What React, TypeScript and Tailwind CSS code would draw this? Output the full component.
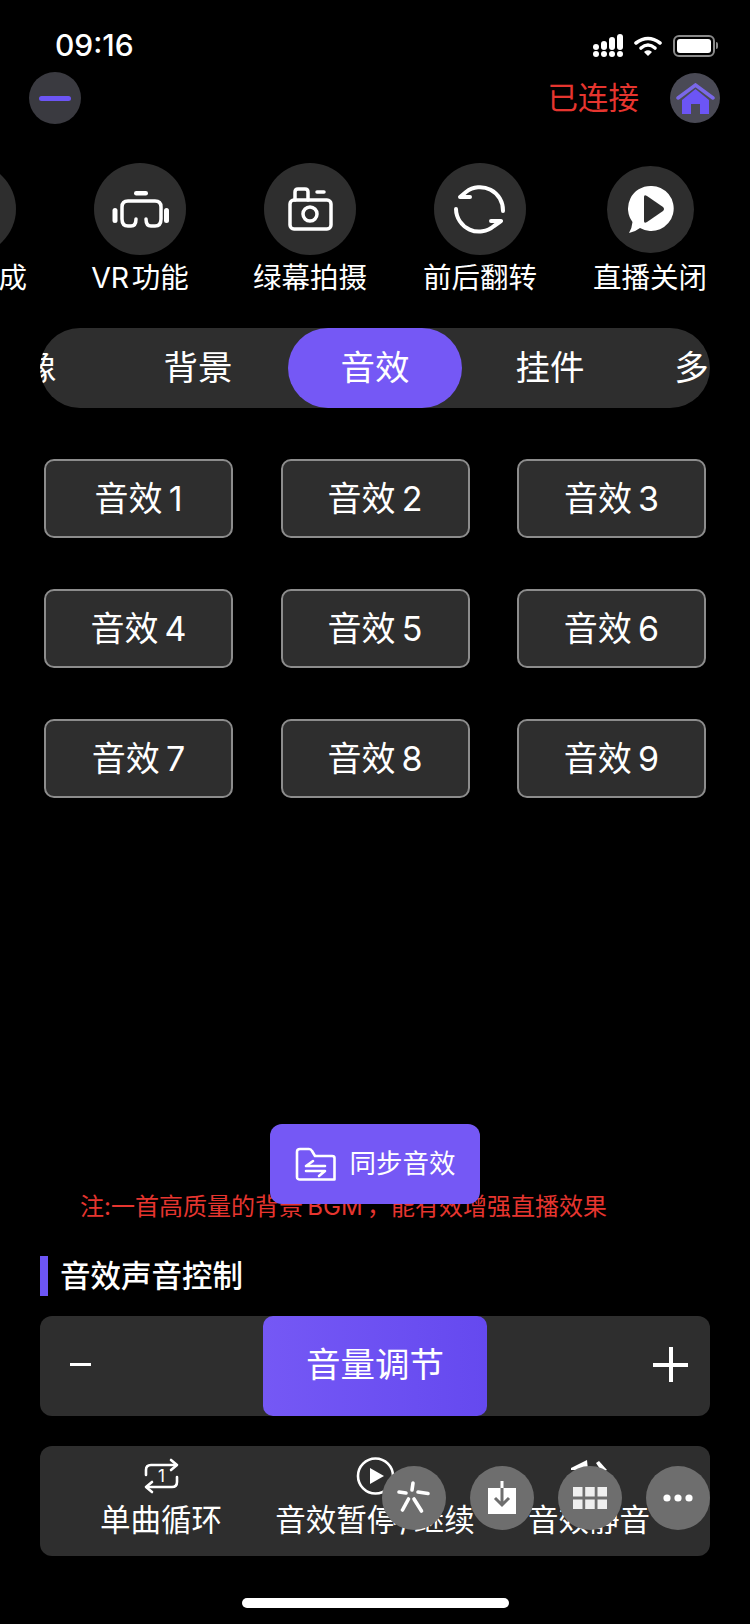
const VrIcon = () => (
  <svg width="57" height="37" viewBox="0 0 57 37" fill="none" stroke="white" strokeWidth="3.500" strokeLinecap="round" strokeLinejoin="round">
    <rect x="22" y="0" width="14" height="4.500" rx="2.200" fill="white" stroke="none" />
    <rect x="0.500" y="17" width="5" height="15" rx="2.500" fill="white" stroke="none" />
    <rect x="52" y="17" width="5" height="15" rx="2.500" fill="white" stroke="none" />
    <path d="M24 28 Q24 35 19 35 H16 Q10 35 10 28 V16 Q10 10 16 10 H43 Q49 10 49 16 V28 Q49 35 43 35 H39 Q34 35 34 28" />
  </svg>
);

const CameraIcon = () => (
  <svg width="45" height="44" viewBox="0 0 45 44" fill="none" stroke="white" strokeWidth="3.500" strokeLinecap="round" strokeLinejoin="round">
    <rect x="2" y="13" width="41" height="29" rx="4" />
    <path d="M7 13 V5 Q7 2 10 2 H17 Q20 2 20 5 V13" />
    <path d="M29 5 H36" />
    <circle cx="22" cy="27" r="7" />
  </svg>
);

const FlipIcon = () => (
  <svg width="52" height="51" viewBox="0 0 52 51" fill="none" stroke="white" strokeWidth="4" strokeLinecap="round" strokeLinejoin="round">
    <path d="M16 13 H6 L12 8 A23 23 0 0 1 49 27" />
    <path d="M2 25 A23 23 0 0 0 40 42 L47 37 H37" />
  </svg>
);

const LiveIcon = () => (
  <svg width="47" height="47" viewBox="0 0 47 47">
    <path d="M23.500 0 A22.500 22.500 0 1 1 13 42 Q8 46 2 47 Q5 42 5.500 36 A22.500 22.500 0 0 1 23.500 0 Z" fill="white" />
    <path d="M17 11 Q17 8 20 10 L36 21 Q38 23 36 25 L20 36 Q17 38 17 35 Z" fill="#2e2e2e" />
  </svg>
);

const HomeIcon = () => (
  <svg width="39" height="31" viewBox="0 0 39 31">
    <path d="M19.500 6 L33 17 V31 H24 V21 H15 V31 H6 V17 Z" fill="#6c55f5" />
    <path d="M2 15 L19.500 2 L37 15" fill="none" stroke="#7a68e8" strokeWidth="3.500" strokeLinecap="round" />
  </svg>
);

const SignalIcon = () => (
  <svg width="30" height="23" viewBox="0 0 30 23" fill="white">
    <circle cx="3" cy="20" r="3" />
    <circle cx="11" cy="20" r="3" />
    <circle cx="19" cy="20" r="3" />
    <circle cx="27" cy="20" r="3" />
    <rect x="0" y="10" width="6" height="6" rx="3" />
    <rect x="8" y="7" width="6" height="9" rx="3" />
    <rect x="16" y="3" width="6" height="13" rx="3" />
    <rect x="24" y="0" width="6" height="16" rx="3" />
  </svg>
);

const WifiIcon = () => (
  <svg width="28" height="20" viewBox="0 0 28 20" fill="none" stroke="white" strokeWidth="3.600" strokeLinecap="round">
    <path d="M2 7 Q14 -2 26 7" />
    <path d="M7 12 Q14 6 21 12" />
    <path d="M14 19 L11 16 Q14 14 17 16 Z" fill="white" strokeWidth="1.500" strokeLinejoin="round" />
  </svg>
);

const BatteryIcon = () => (
  <div className="flex items-center">
    <div className="w-[42px] h-[22px] rounded-[6px] border-2 border-[#8a8a8a] p-[2px]">
      <div className="w-full h-full rounded-[3px] bg-white" />
    </div>
    <div className="w-[2px] h-[7px] rounded-r bg-[#8a8a8a] ml-[1px]" />
  </div>
);

const FolderSyncIcon = () => (
  <svg width="41" height="34" viewBox="0 0 41 34" fill="none" stroke="white" strokeWidth="2.600" strokeLinecap="round" strokeLinejoin="round">
    <path d="M5 2 H14 Q16 2 17 4 L20 9 H37 Q39.500 9 39.500 11 V32.500 H5 Q2 32.500 2 30 V5 Q2 2 5 2 Z" />
    <path d="M18 14 L11 19 H30" />
    <path d="M11 24 H30 L24 29" />
  </svg>
);

const RepeatOneIcon = () => (
  <svg width="35" height="36" viewBox="0 0 35 36" fill="none" stroke="white" strokeWidth="2.600" strokeLinecap="round" strokeLinejoin="round">
    <path d="M2 17 V12 Q2 7 7 7 H32" />
    <path d="M27 2 L33 7 L27 12" />
    <path d="M33 19 V24 Q33 29 28 29 H3" />
    <path d="M8 24 L2 29 L8 34" />
    <text x="17.500" y="24" textAnchor="middle" fontSize="17" fill="white" stroke="none" fontFamily="Inter, sans-serif">1</text>
  </svg>
);

const PlayCircleIcon = () => (
  <svg width="39" height="38" viewBox="0 0 39 38" fill="none">
    <circle cx="19.500" cy="19" r="17.500" stroke="white" strokeWidth="2.600" />
    <path d="M14 11 L28 19 L14 27 Z" fill="white" />
  </svg>
);

const SpeakerIcon = () => (
  <svg width="38" height="12" viewBox="0 0 38 12" fill="white">
    <path d="M1 8 L17 0 L18 10 L1 10 Z" />
    <path d="M26 3 L29 1 L37 10 L32 12 Z" />
  </svg>
);

const StarIcon = () => (
  <svg width="64" height="64" viewBox="0 0 64 64" stroke="white" strokeWidth="3.600" strokeLinecap="round">
    <path d="M30 24 L31 17" />
    <path d="M17 26 L24 27" />
    <path d="M36 26 L46 27.500" />
    <path d="M20.500 44 L26.500 33" />
    <path d="M32 33 L39.500 45" />
  </svg>
);

const DownloadIcon = () => (
  <svg width="64" height="64" viewBox="0 0 64 64">
    <rect x="18" y="22" width="28" height="26" fill="white" />
    <rect x="30.500" y="15" width="3" height="8" fill="white" />
    <path d="M32 22 V38 M25 32 L32 39 L39 32" fill="none" stroke="#6e6e6e" strokeWidth="3" />
  </svg>
);

const GridIcon = () => (
  <svg width="64" height="64" viewBox="0 0 64 64" fill="#efefef">
    <rect x="15" y="21" width="9.500" height="9.500" />
    <rect x="27.200" y="21" width="9.500" height="9.500" />
    <rect x="39.500" y="21" width="9.500" height="9.500" />
    <rect x="15" y="33.500" width="9.500" height="9.500" />
    <rect x="27.200" y="33.500" width="9.500" height="9.500" />
    <rect x="39.500" y="33.500" width="9.500" height="9.500" />
  </svg>
);

const DotsIcon = () => (
  <svg width="64" height="64" viewBox="0 0 64 64" fill="white">
    <circle cx="21" cy="32" r="3.600" />
    <circle cx="32" cy="32" r="3.600" />
    <circle cx="43" cy="32" r="3.600" />
  </svg>
);

const quickActions = [
  { label: "画面合成", icon: null, size: "w-[92px] h-[92px]" },
  { label: "VR\u200a功能", icon: <VrIcon />, size: "w-[92px] h-[92px]" },
  { label: "绿幕拍摄", icon: <CameraIcon />, size: "w-[92px] h-[92px]" },
  { label: "前后翻转", icon: <FlipIcon />, size: "w-[92px] h-[92px]" },
  { label: "直播关闭", icon: <LiveIcon />, size: "w-[87px] h-[87px]" },
];

const tabs = ["录像", "背景", "音效", "挂件", "多媒体"];
const effects = ["音效\u20091", "音效\u20092", "音效\u20093", "音效\u20094", "音效\u20095", "音效\u20096", "音效\u20097", "音效\u20098", "音效\u20099"];

export default function App() {
  return (
    <div className="relative w-[750px] h-[1624px] overflow-hidden bg-black text-white flex flex-col font-['Inter','Noto_Sans_CJK_SC',sans-serif]">
      {/* status bar */}
      <div className="h-[72px] flex items-start justify-between pl-[55px] pr-[32px] pt-[26px]">
        <span className="text-[30px] leading-[38px] font-medium">09:16</span>
        <div className="flex items-center gap-[11px] pt-[8px]">
          <SignalIcon />
          <WifiIcon />
          <BatteryIcon />
        </div>
      </div>

      {/* header */}
      <div className="h-[52px] flex items-center justify-between px-[30px]">
        <div className="w-[52px] h-[52px] -ml-[1px] rounded-full bg-[#3a3a40] flex items-center justify-center">
          <div className="w-[32px] h-[5px] rounded-full bg-[#6c55f5]" />
        </div>
        <div className="flex items-center gap-[31px]">
          <span className="text-[30.5px] leading-[40px] text-[#e6352f]">已连接</span>
          <div className="w-[50px] h-[50px] rounded-full bg-[#4a4a55] flex items-center justify-center">
            <HomeIcon />
          </div>
        </div>
      </div>

      {/* quick actions */}
      <div className="mt-[39px] flex ml-[-115px]">
        {quickActions.map((item) => (
          <div key={item.label} className="w-[170px] shrink-0 flex flex-col items-center">
            <div className="h-[92px] flex items-center justify-center">
              <div className={`${item.size} rounded-full bg-[#2e2e2e] flex items-center justify-center`}>
                {item.icon}
              </div>
            </div>
            <span className="mt-[9px] text-[28.5px] leading-[28px] whitespace-nowrap">{item.label}</span>
          </div>
        ))}
      </div>

      {/* tabs */}
      <div className="mt-[36px] mx-[40px] h-[80px] rounded-full bg-[#2e2e2e] overflow-hidden flex shrink-0">
        <div className="flex ml-[-106px]">
          {tabs.map((tab) => (
            <div
              key={tab}
              className={
                tab === "音效"
                  ? "w-[174px] ml-[2px] shrink-0 h-[80px] rounded-[40px] bg-[#7558f5] flex items-center justify-center text-[34.5px]"
                  : "w-[176px] shrink-0 h-[80px] flex items-center justify-center text-[34.5px]"
              }
            >
              {tab}
            </div>
          ))}
        </div>
      </div>

      {/* effect buttons */}
      <div className="mt-[51px] ml-[44px] grid grid-cols-[189px_189px_189px] gap-x-[47.5px] gap-y-[51px]">
        {effects.map((name) => (
          <div
            key={name}
            className="h-[79px] rounded-[10px] border-2 border-[#8c8c8c] bg-[#2e2e2e] flex items-center justify-center text-[34px]"
          >
            {name}
          </div>
        ))}
      </div>

      {/* sync */}
      <div className="relative z-10 mt-[326px] self-center w-[210px] h-[80px] rounded-[12px] bg-[#7558f5] flex items-center justify-center gap-[14px] shrink-0">
        <FolderSyncIcon />
        <span className="text-[26.5px]">同步音效</span>
      </div>
      <p className="-mt-[12px] pl-[80px] text-[24px] leading-[30px] text-[#e6352f] whitespace-nowrap">
        注:一首高质量的背景&#8201;BGM&#8201;，能有效增强直播效果
      </p>

      {/* volume */}
      <div className="mt-[34px] ml-[40px] flex items-center gap-[12px]">
        <div className="w-[8px] h-[40px] bg-[#6c55f5]" />
        <span className="text-[30.5px] leading-[40px] font-medium">音效声音控制</span>
      </div>
      <div className="mt-[20px] mx-[40px] h-[100px] rounded-[12px] bg-[#2e2e2e] flex items-center justify-between pl-[30px] pr-[22px] pb-[3px] shrink-0 relative">
        <div className="w-[21px] h-[3px] bg-white" />
        <div className="absolute left-[223px] top-0 w-[224px] h-[100px] pb-[2px] rounded-[10px] bg-gradient-to-r from-[#7558f5] to-[#6549ef] flex items-center justify-center text-[34.5px]">
          音量调节
        </div>
        <div className="relative w-[35px] h-[35px] flex items-center justify-center">
          <div className="w-[35px] h-[4px] bg-white" />
          <div className="absolute w-[4px] h-[35px] bg-white" />
        </div>
      </div>

      {/* playback panel */}
      <div className="relative mt-[30px] mx-[40px] h-[110px] rounded-[12px] bg-[#2e2e2e] px-[14px] grid grid-cols-3 shrink-0">
        <div className="flex flex-col items-center pt-[12px]">
          <div className="h-[36px] flex items-center"><RepeatOneIcon /></div>
          <span className="mt-[11px] text-[30.5px] leading-[30px] whitespace-nowrap">单曲循环</span>
        </div>
        <div className="flex flex-col items-center pt-[12px]">
          <div className="h-[36px] flex items-center"><PlayCircleIcon /></div>
          <span className="mt-[11px] text-[30.5px] leading-[30px] whitespace-nowrap">音效暂停&#8202;/&#8202;继续</span>
        </div>
        <div className="flex flex-col items-center pt-[14px]">
          <div className="h-[34px]"><SpeakerIcon /></div>
          <span className="mt-[11px] text-[30.5px] leading-[30px] whitespace-nowrap">音效静音</span>
        </div>

        {/* floating shortcuts */}
        <div className="absolute top-[20px] right-0 flex gap-[24px]">
          <div className="w-[64px] h-[64px] rounded-full bg-[#6e6e6e]"><StarIcon /></div>
          <div className="w-[64px] h-[64px] rounded-full bg-[#6e6e6e]"><DownloadIcon /></div>
          <div className="w-[64px] h-[64px] rounded-full bg-[#6e6e6e]"><GridIcon /></div>
          <div className="w-[64px] h-[64px] rounded-full bg-[#6e6e6e]"><DotsIcon /></div>
        </div>
      </div>

      {/* home indicator */}
      <div className="mt-[42px] self-center w-[267px] h-[10px] rounded-full bg-white shrink-0" />
    </div>
  );
}
